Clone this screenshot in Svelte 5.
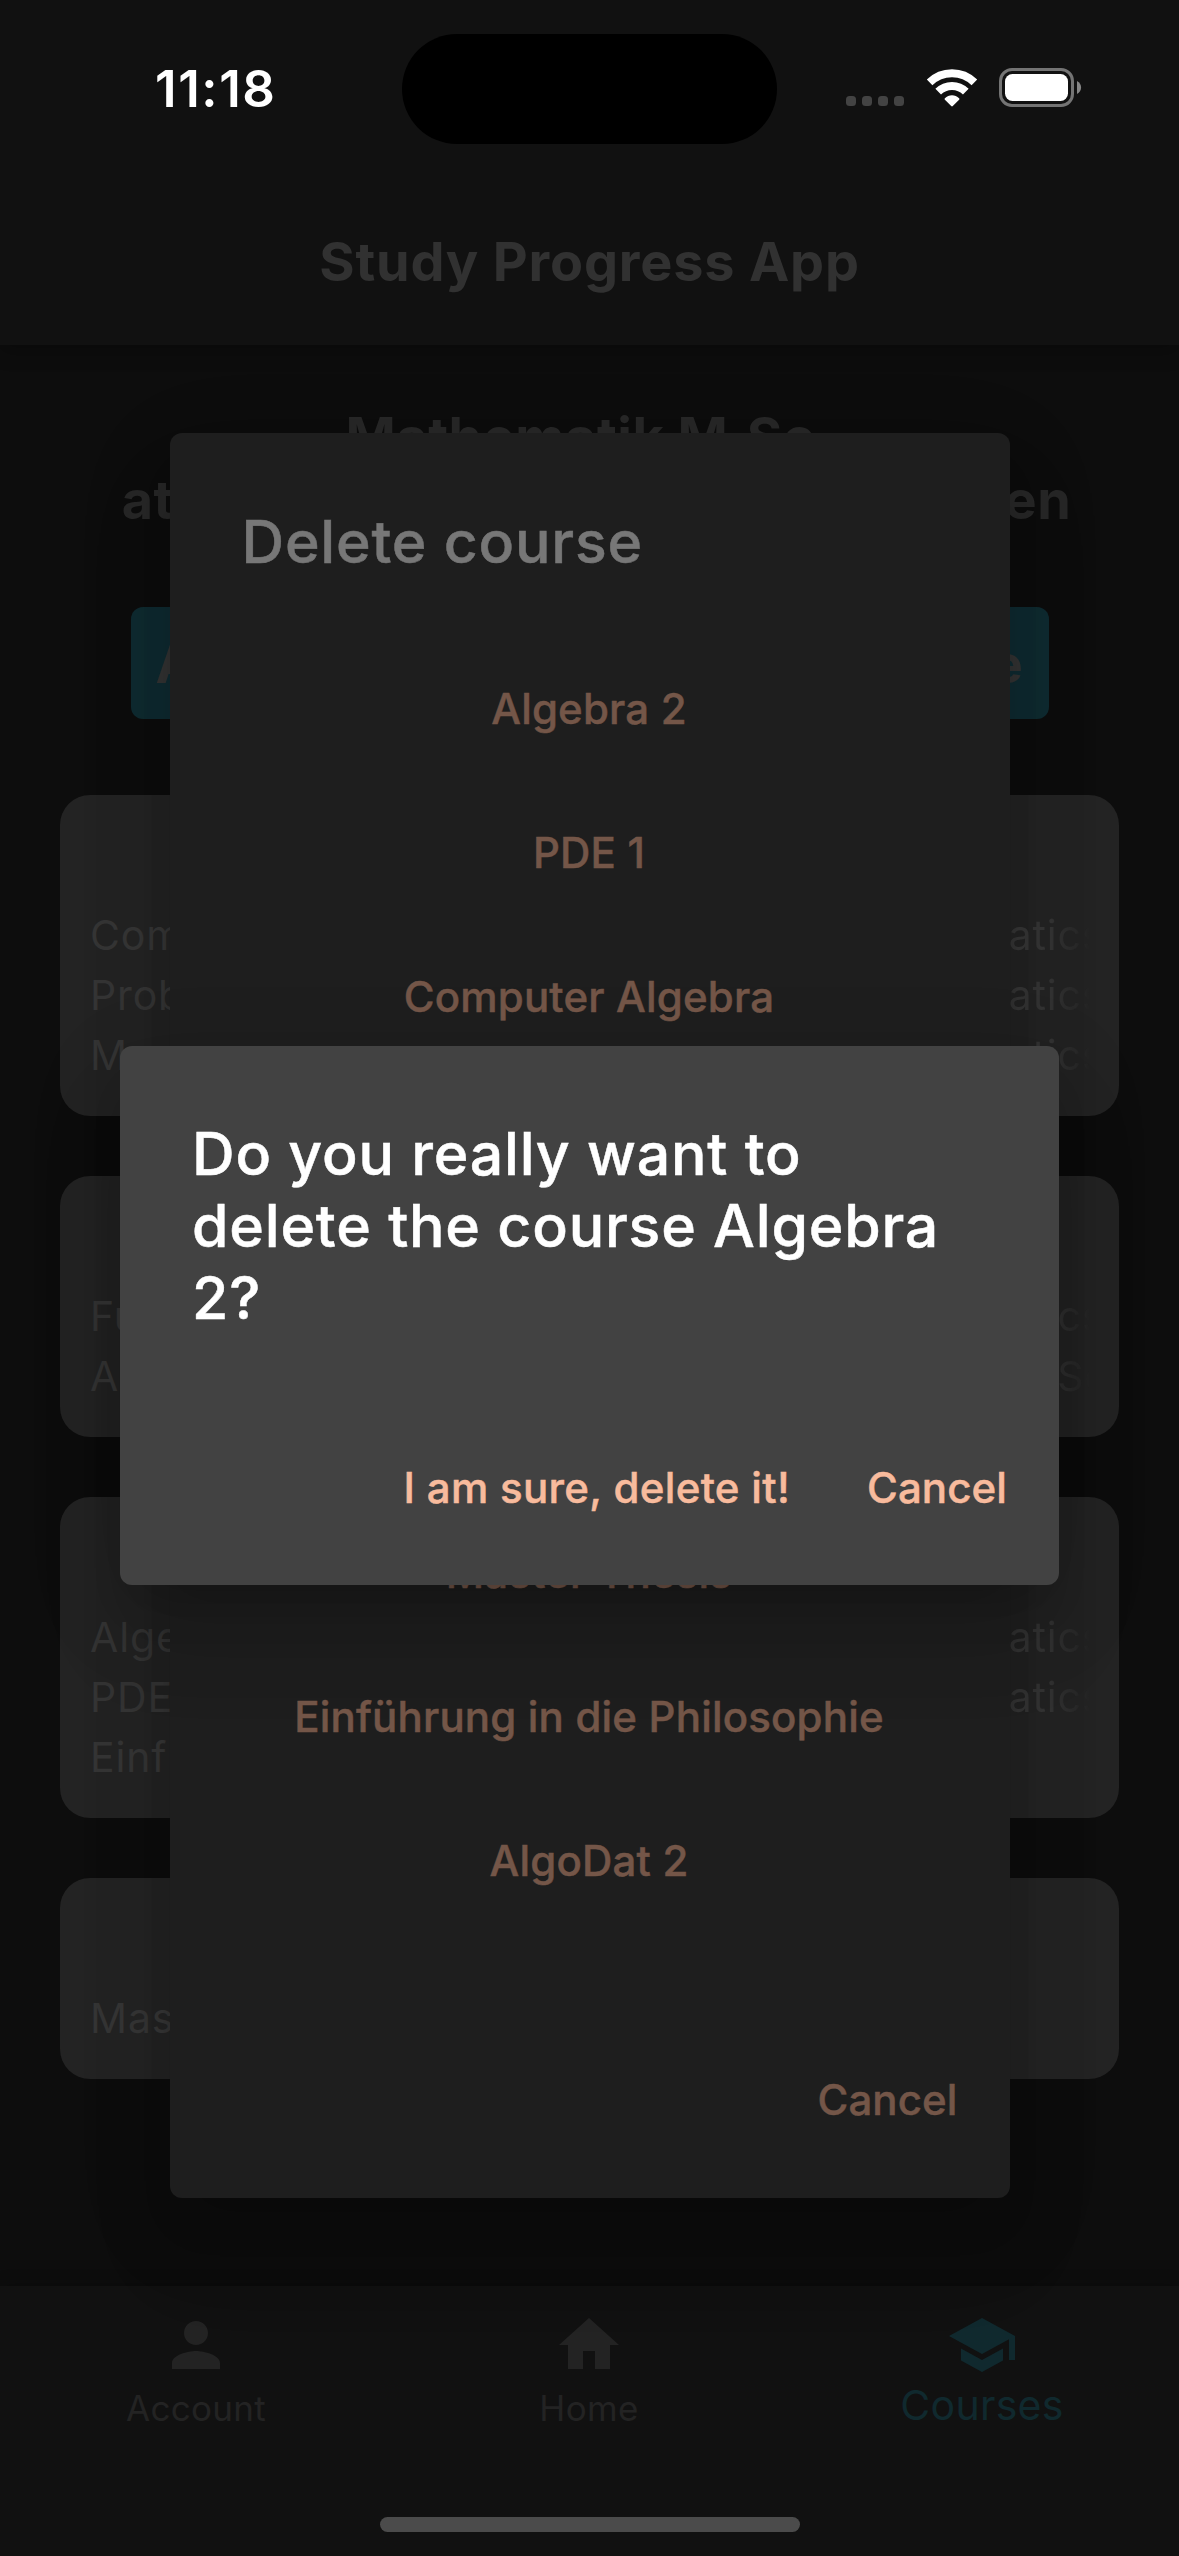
<script>
  const semesters = [
    {
      name: 'Semester 1',
      courses: [
        ['Computer Algebra', 'Mathematics'],
        ['Probability Theory', 'Mathematics'],
        ['Measure Theory', 'Mathematics']
      ]
    },
    {
      name: 'Semester 2',
      courses: [
        ['Functional Analysis', 'Mathematics'],
        ['AlgoDat 2', 'Computer Science']
      ]
    },
    {
      name: 'Semester 3',
      courses: [
        ['Algebra 2', 'Mathematics'],
        ['PDE 1', 'Mathematics'],
        ['Einführung in die Philosophie', 'Other']
      ]
    },
    { name: 'Semester 4', courses: [['Master Thesis', 'Thesis']] }
  ];

  const deletable = [
    'Algebra 2',
    'PDE 1',
    'Computer Algebra',
    'Probability Theory',
    'Measure Theory',
    'Functional Analysis',
    'Master Thesis',
    'Einführung in die Philosophie',
    'AlgoDat 2'
  ];

  const tabs = [
    {
      label: 'Account',
      icon: 'M12 12c2.21 0 4-1.79 4-4s-1.79-4-4-4-4 1.79-4 4 1.79 4 4 4zm0 2c-2.67 0-8 1.34-8 4v2h16v-2c0-2.66-5.33-4-8-4z'
    },
    { label: 'Home', icon: 'M10 20v-6h4v6h5v-8h3L12 3 2 12h3v8z' },
    {
      label: 'Courses',
      active: true,
      icon: 'M5 13.18v4L12 21l7-3.82v-4L12 17l-7-3.82zM12 3L1 9l11 6 9-4.91V17h2V9L12 3z'
    }
  ];
</script>

<div class="screen">
  <header class="appbar">
    <div class="status">
      <span class="time">11:18</span>
      <div class="island"></div>
      <div class="indicators">
        <div class="dots"><i></i><i></i><i></i><i></i></div>
        <svg class="wifi" width="52" height="38" viewBox="0 0 52 38">
          <g fill="none" stroke="#fff" stroke-width="8">
            <path d="M3.6 13.4A32 32 0 0 1 48.4 13.4" />
            <path d="M12.2 22.6A19.6 19.6 0 0 1 39.8 22.6" />
          </g>
          <path
            d="M18.9 29.2C22.8 25.2 29.2 25.2 33.1 29.2Q33.9 30 33.1 30.8L26.8 37.1Q26 37.8 25.2 37.1L18.9 30.8Q18.1 30 18.9 29.2Z"
            fill="#fff"
          />
        </svg>
        <svg class="battery" width="83" height="39" viewBox="0 0 83 39">
          <rect x="1.5" y="1.5" width="72" height="36" rx="11.5" fill="none" stroke="#747474" stroke-width="3" />
          <rect x="6" y="6" width="63" height="27" rx="7.5" fill="#fff" />
          <path d="M78 13C83.4 15.4 83.4 23.6 78 26Z" fill="#868686" />
        </svg>
      </div>
    </div>
    <h1>Study Progress App</h1>
  </header>

  <main>
    <h2>
      <span>Mathematik M.Sc.</span>
      <span class="uni">at Technische Universität München</span>
    </h2>
    <button class="manage">Add a course or delete a course</button>
    <div class="cards">
      {#each semesters as semester}
        <section class="card">
          <h3>{semester.name}</h3>
          {#each semester.courses as [course, area]}
            <div class="row">
              <span>{course}</span>
              <span class="area">{area}</span>
            </div>
          {/each}
        </section>
      {/each}
    </div>
  </main>

  <nav>
    {#each tabs as tab}
      <div class="tab" class:active={tab.active}>
        <svg width="72" height="72" viewBox="0 0 24 24"><path d={tab.icon} fill="currentColor" /></svg>
        <span>{tab.label}</span>
      </div>
    {/each}
  </nav>

  <div class="overlay">
    <div class="dialog list">
      <h4>Delete course</h4>
      <div class="options">
        {#each deletable as course}
          <button>{course}</button>
        {/each}
      </div>
      <div class="actions"><button>Cancel</button></div>
    </div>
  </div>

  <div class="overlay">
    <div class="dialog confirm">
      <h4>Do you really want to delete the course Algebra 2?</h4>
      <div class="actions">
        <button class="sure">I am sure, delete it!</button>
        <button>Cancel</button>
      </div>
    </div>
  </div>

  <div class="home-indicator"></div>
</div>

<style>
  :global(body) {
    background: #0d0d0d;
  }
  .screen {
    position: relative;
    display: flex;
    flex-direction: column;
    width: 1179px;
    height: 2556px;
    overflow: hidden;
    background: #0d0d0d;
    font-family: Inter, 'Liberation Sans', sans-serif;
    font-kerning: normal;
  }
  h1,
  h2,
  h3,
  h4 {
    margin: 0;
  }
  button {
    margin: 0;
    padding: 0;
    border: 0;
    background: none;
    font: inherit;
    color: inherit;
    letter-spacing: inherit;
  }

  .appbar {
    flex: none;
    height: 345px;
    background: #111;
    box-shadow: 0 6px 18px rgba(0, 0, 0, 0.25);
  }
  .status {
    display: grid;
    grid-template-columns: 402px 375px 1fr;
    align-items: center;
    height: 177px;
  }
  .time {
    padding-left: 155px;
    color: #fff;
    font-size: 51px;
    font-weight: 600;
    line-height: 60px;
    letter-spacing: 1.6px;
  }
  .island {
    width: 375px;
    height: 110px;
    margin-top: 1px;
    border-radius: 55px;
    background: #000;
  }
  .indicators {
    display: flex;
    align-items: center;
    padding-left: 69px;
  }
  .dots {
    display: flex;
    gap: 6px;
    padding-top: 25px;
  }
  .dots i {
    width: 10px;
    height: 10px;
    border-radius: 3.5px;
    background: #434343;
  }
  .wifi {
    margin-left: 22px;
    margin-top: -2px;
  }
  .battery {
    margin-left: 21px;
    margin-top: -2px;
  }
  h1 {
    padding-top: 1px;
    color: #313131;
    font-size: 54px;
    font-weight: 700;
    line-height: 168px;
    letter-spacing: 0.8px;
    text-align: center;
  }

  main {
    display: flex;
    flex: 1;
    flex-direction: column;
    align-items: center;
    padding-top: 60px;
  }
  h2 {
    display: flex;
    flex-direction: column;
    align-items: center;
    color: #272727;
    font-size: 54px;
    font-weight: 700;
    line-height: 63px;
    letter-spacing: 0.5px;
    white-space: nowrap;
  }
  .uni {
    padding-left: 14px;
  }
  .manage {
    width: 918px;
    height: 112px;
    margin-top: 76px;
    padding: 0 25px;
    border-radius: 12px;
    background: #0f2a30;
    color: #323232;
    font-size: 54px;
    font-weight: 700;
    letter-spacing: 0.48px;
    text-align-last: justify;
    white-space: nowrap;
  }
  .cards {
    display: flex;
    flex-direction: column;
    gap: 60px;
    width: 1059px;
    margin-top: 76px;
  }
  .card {
    padding: 30px 30px 31px;
    border-radius: 30px;
    background: #232323;
    color: #353535;
    font-size: 41px;
    line-height: 60px;
    letter-spacing: 0.85px;
  }
  h3 {
    margin-bottom: 20px;
    font-size: 46px;
    font-weight: 700;
    line-height: 60px;
    text-align: center;
  }
  .row {
    display: grid;
    grid-template-columns: 1fr 243px;
    white-space: nowrap;
  }
  .area {
    overflow: hidden;
    mask-image: linear-gradient(to right, #000 200px, transparent 247px);
  }

  nav {
    display: grid;
    flex: none;
    grid-template-columns: repeat(3, 1fr);
    height: 270px;
    background: #111;
    box-shadow: 0 -3px 14px rgba(0, 0, 0, 0.15);
  }
  .tab {
    display: flex;
    flex-direction: column;
    align-items: center;
    padding-top: 23px;
    padding-right: 1px;
    color: #232323;
    font-size: 35px;
    line-height: 54px;
    letter-spacing: 0.3px;
  }
  .tab.active {
    color: #10292e;
    font-size: 41px;
    line-height: 48px;
    letter-spacing: 0.3px;
  }

  .overlay {
    position: absolute;
    inset: 0;
    display: flex;
    align-items: center;
    justify-content: center;
    padding: 177px 0 102px;
  }
  .dialog {
    box-sizing: border-box;
    border-radius: 12px;
    -webkit-text-stroke: 0.5px currentColor;
    box-shadow:
      0 33px 45px -21px rgba(0, 0, 0, 0.2),
      0 60px 90px 0 rgba(0, 0, 0, 0.09),
      0 27px 100px 6px rgba(0, 0, 0, 0.08);
  }
  h4 {
    padding: 0 72px;
    font-size: 59px;
    font-weight: 500;
    line-height: 72px;
    letter-spacing: 0.8px;
  }
  .actions {
    display: flex;
    justify-content: flex-end;
    gap: 77px;
    padding-right: 52px;
    font-size: 42px;
    font-weight: 500;
    line-height: 144px;
    letter-spacing: 0.1px;
  }
  .sure {
    letter-spacing: 0.32px;
  }
  .list {
    width: 840px;
    height: 1765px;
    padding-top: 73px;
    background: #1e1e1e;
    color: #745648;
  }
  .list h4 {
    color: #777;
  }
  .options {
    display: flex;
    flex-direction: column;
    align-items: center;
    padding: 59px 1px 95px 0;
    font-size: 42px;
    font-weight: 500;
    line-height: 144px;
    letter-spacing: 0.18px;
  }
  .confirm {
    width: 939px;
    height: 539px;
    padding-top: 72px;
    background: #424242;
    color: #f8bb9d;
  }
  .confirm h4 {
    margin-bottom: 82px;
    color: #fff;
  }

  .home-indicator {
    position: absolute;
    bottom: 24px;
    left: 380px;
    width: 420px;
    height: 15px;
    border-radius: 8px;
    background: #4b4b4b;
  }
</style>
